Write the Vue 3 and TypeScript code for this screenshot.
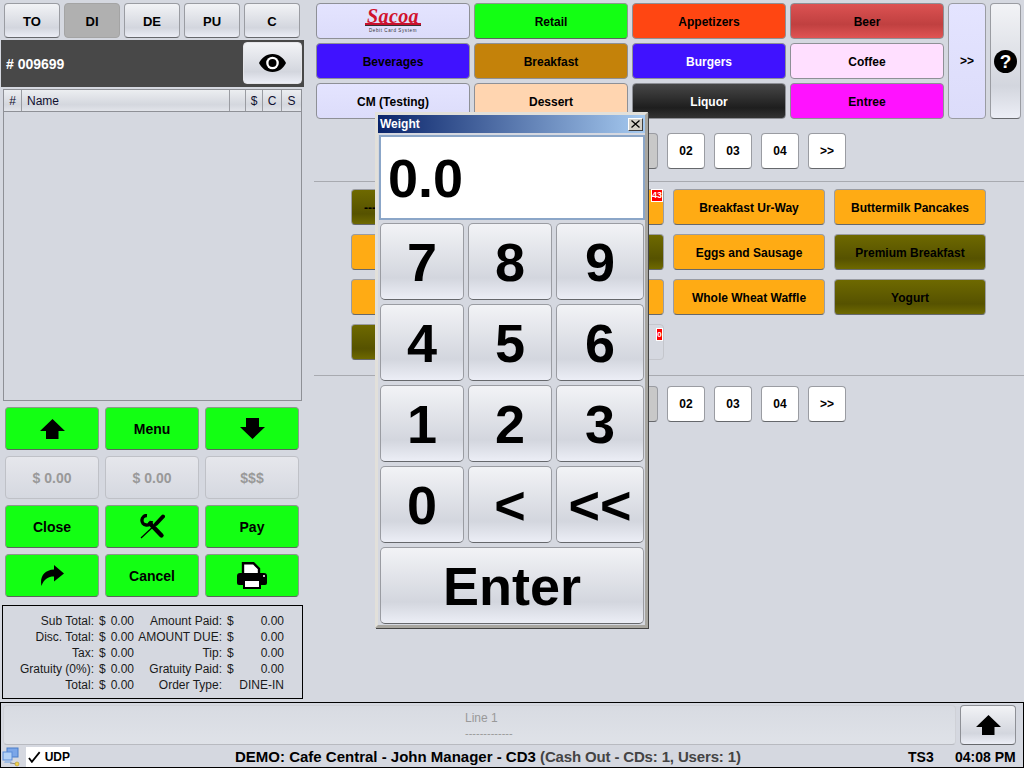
<script setup lang="ts">
interface Cat { label: string; cls: string }
const tabs = ['TO', 'DI', 'DE', 'PU', 'C']
const cats: Cat[] = [
  { label: '', cls: 'logo lav' },
  { label: 'Retail', cls: 'green' },
  { label: 'Appetizers', cls: 'red' },
  { label: 'Beer', cls: 'beer' },
  { label: 'Beverages', cls: 'blue' },
  { label: 'Breakfast', cls: 'brown' },
  { label: 'Burgers', cls: 'blue white' },
  { label: 'Coffee', cls: 'pink' },
  { label: 'CM (Testing)', cls: 'lav' },
  { label: 'Dessert', cls: 'peach' },
  { label: 'Liquor', cls: 'dark white' },
  { label: 'Entree', cls: 'magenta' }
]
interface Item { label: string; cls: string; badge?: string }
const items: Item[] = [
  { label: '---', cls: 'olive dash' },
  { label: '', cls: 'orange', badge: '43' },
  { label: 'Breakfast Ur-Way', cls: 'orange' },
  { label: 'Buttermilk Pancakes', cls: 'orange' },
  { label: '', cls: 'orange' },
  { label: '', cls: 'olive' },
  { label: 'Eggs and Sausage', cls: 'orange' },
  { label: 'Premium Breakfast', cls: 'olive' },
  { label: '', cls: 'orange' },
  { label: '', cls: 'orange' },
  { label: 'Whole Wheat Waffle', cls: 'orange' },
  { label: 'Yogurt', cls: 'olive' },
  { label: '', cls: 'olive' },
  { label: '', cls: 'off', badge: '0' }
]
const pages = ['', '02', '03', '04', '>>']
const summary = [
  ['Sub Total:', '0.00', 'Amount Paid:', '$', '0.00'],
  ['Disc. Total:', '0.00', 'AMOUNT DUE:', '$', '0.00'],
  ['Tax:', '0.00', 'Tip:', '$', '0.00'],
  ['Gratuity (0%):', '0.00', 'Gratuity Paid:', '$', '0.00'],
  ['Total:', '0.00', 'Order Type:', '', 'DINE-IN']
]
const keys = ['7', '8', '9', '4', '5', '6', '1', '2', '3', '0', '<', '<<']
</script>

<template>
  <div class="screen">
    <div class="main">
      <section class="left">
        <div class="tabs">
          <button v-for="t in tabs" :key="t" class="btn tab" :class="{ active: t === 'DI' }">{{ t }}</button>
        </div>
        <div class="order">
          <span class="order-no"># 009699</span>
          <button class="btn eye">
            <svg width="27" height="18" viewBox="0 0 27 18">
              <path d="M13.5 0C7 0 2.500 4 0 9c2.500 5 7 9 13.500 9S24.500 14 27 9C24.500 4 20 0 13.500 0z" fill="#000" />
              <circle cx="13.500" cy="9" r="6.300" fill="#fff" />
              <circle cx="13.500" cy="9" r="4" fill="#000" />
            </svg>
          </button>
        </div>
        <div class="table">
          <div class="thead">
            <span class="th c-num">#</span>
            <span class="th c-name">Name</span>
            <span class="th c-blank"></span>
            <span class="th c-price">$</span>
            <span class="th c-c">C</span>
            <span class="th c-s">S</span>
          </div>
        </div>
        <div class="actions">
          <button class="btn green act">
            <svg width="25" height="20" viewBox="0 0 25 20"><polygon points="12.500,0 25,12 18.500,12 18.500,20 6,20 6,12 0,12" fill="#000" /></svg>
          </button>
          <button class="btn green act">Menu</button>
          <button class="btn green act">
            <svg width="25" height="21" viewBox="0 0 25 21"><polygon points="6,0 19,0 19,9 25,9 12.500,21 0,9 6,9" fill="#000" /></svg>
          </button>
          <button class="btn act disabled">$ 0.00</button>
          <button class="btn act disabled">$ 0.00</button>
          <button class="btn act disabled">$$$</button>
          <button class="btn green act">Close</button>
          <button class="btn green act">
            <svg width="25" height="25" viewBox="0 0 25 25" fill="none" stroke="#000">
              <path d="M23 2.500L16 10" stroke-width="4" stroke-linecap="round" />
              <path d="M16 10L1 24" stroke-width="1.300" />
              <path d="M10 9.500L21.500 21.500" stroke-width="4.400" stroke-linecap="round" />
              <path d="M7 1.500A4.800 4.800 0 1 0 11.500 7" stroke-width="3.400" />
            </svg>
          </button>
          <button class="btn green act">Pay</button>
          <button class="btn green act">
            <svg width="24" height="21" viewBox="0 0 24 21"><path d="M14 0L24 8.500L14 16.500V11.500C8 11.500 4 14 1.500 21C-.5 12 4 5 14 4.500Z" fill="#000" /></svg>
          </button>
          <button class="btn green act">Cancel</button>
          <button class="btn green act">
            <svg width="30" height="27" viewBox="0 0 30 27">
              <path d="M6 1.200h10.500l5.500 5.500v6H6z" fill="#fff" stroke="#000" stroke-width="2.400" />
              <path d="M3 11h24a3 3 0 0 1 3 3v7a2 2 0 0 1-2 2H2a2 2 0 0 1-2-2v-7a3 3 0 0 1 3-3z" fill="#000" />
              <rect x="7" y="18" width="16" height="8" fill="#fff" stroke="#000" stroke-width="2" />
              <circle cx="27" cy="14" r="1" fill="#fff" />
            </svg>
          </button>
        </div>
        <div class="summary">
          <div v-for="row in summary" :key="row[0]" class="sum-row">
            <span class="sum-label">{{ row[0] }}</span>
            <span class="sum-val"><span>$</span><span>{{ row[1] }}</span></span>
            <span class="sum-label">{{ row[2] }}</span>
            <span class="sum-val"><span>{{ row[3] }}</span><span>{{ row[4] }}</span></span>
          </div>
        </div>
      </section>

      <section class="right">
        <div class="cats">
          <button v-for="c in cats" :key="c.label" class="btn cat" :class="c.cls">
            <span v-if="c.label">{{ c.label }}</span>
            <span v-else class="sacoa">
              <span class="sacoa-name">Sacoa</span>
              <span class="sacoa-sub">Debit Card System</span>
            </span>
          </button>
          <button class="btn lav more">&gt;&gt;</button>
          <button class="btn help">
            <svg width="23" height="23" viewBox="0 0 23 23">
              <circle cx="11.500" cy="11.500" r="11.500" fill="#000" />
              <text x="11.500" y="18" text-anchor="middle" class="help-q">?</text>
            </svg>
          </button>
        </div>
        <div class="pager">
          <button v-for="p in pages" :key="p" class="btn page" :class="{ current: p === '' }">{{ p }}</button>
        </div>
        <div class="sep sep-a"></div>
        <div class="items">
          <button v-for="(it, i) in items" :key="i" class="btn item" :class="it.cls">
            {{ it.label }}
            <span v-if="it.badge" class="badge" :class="{ small: it.badge === '0' }">{{ it.badge }}</span>
          </button>
        </div>
        <div class="sep sep-b"></div>
        <div class="pager pager-b">
          <button v-for="p in pages" :key="p" class="btn page" :class="{ current: p === '' }">{{ p }}</button>
        </div>
      </section>
    </div>

    <footer class="footer">
      <div class="line-row">
        <div class="line">
          <span>Line 1</span>
          <span class="line-dash">-------------</span>
        </div>
        <button class="btn up">
          <svg width="25" height="20" viewBox="0 0 25 20"><polygon points="12.500,0 25,12 18.500,12 18.500,20 6,20 6,12 0,12" fill="#000" /></svg>
        </button>
      </div>
      <div class="status">
        <svg class="net" width="19" height="20" viewBox="0 0 19 20">
          <rect x="5" y="1" width="11" height="9" fill="#7ba6e8" stroke="#4a7cc8" />
          <rect x="1" y="5" width="9" height="8" fill="#b4d2f6" stroke="#5a8cd8" />
          <path d="M3 14h6l1 2H2z" fill="#9fbde4" />
          <path d="M8 16l7 1" stroke="#888" />
          <circle cx="15" cy="17" r="2" fill="#f2d04a" stroke="#a08820" stroke-width=".5" />
        </svg>
        <div class="udp">
          <svg width="13" height="12" viewBox="0 0 13 12"><path d="M1 7l3 4L12 1" fill="none" stroke="#000" stroke-width="1.800" /></svg>
          <span>UDP</span>
        </div>
        <div class="demo">DEMO: Cafe Central - John Manager - CD3 <span class="demo-sub">(Cash Out - CDs: 1, Users: 1)</span></div>
        <span class="ts">TS3</span>
        <span class="time">04:08 PM</span>
      </div>
    </footer>

    <div class="dialog">
      <div class="title">
        <span>Weight</span>
        <button class="close">
          <svg width="9" height="8" viewBox="0 0 9 8"><path d="M.5 .5l8 7M8.500 .5l-8 7" stroke="#000" stroke-width="1.300" /></svg>
        </button>
      </div>
      <div class="display">0.0</div>
      <div class="keys">
        <button v-for="k in keys" :key="k" class="btn key">{{ k }}</button>
        <button class="btn key enter">Enter</button>
      </div>
    </div>
  </div>
</template>

<style>
html, body { margin: 0; background: #d5d8e0; }
</style>

<style scoped>
.screen {
  position: relative;
  width: 1024px;
  height: 768px;
  overflow: hidden;
  display: flex;
  flex-direction: column;
  background: #d5d8e0;
  font-family: "Liberation Sans", Arial, sans-serif;
  color: #000;
}
.main { display: flex; height: 702px; }
.left { width: 314px; flex: none; }
.right { flex: 1; }

.btn {
  box-sizing: border-box;
  margin: 0;
  padding: 0;
  display: flex;
  align-items: center;
  justify-content: center;
  border: 1px solid #9a9ca2;
  border-bottom-color: #66686c;
  border-radius: 4px;
  background: linear-gradient(#f2f3f6 0%, #d3d6de 72%, #eceef6 100%);
  font: bold 12px "Liberation Sans", Arial, sans-serif;
  color: #000;
}

.tabs { display: flex; gap: 4px; padding: 3px 0 0 4px; }
.tab { width: 56px; height: 35px; font-size: 13px; padding-top: 2px; }
.tab.active { background: #b0b0b0; border-color: #a4a4a4; }

.order {
  box-sizing: border-box;
  width: 303px;
  height: 47px;
  margin: 2px 0 0 1px;
  padding: 2px 2px 3px 5px;
  display: flex;
  align-items: center;
  justify-content: space-between;
  background: #484848;
}
.order-no { color: #fff; font-size: 14px; font-weight: bold; padding-top: 2px; }
.eye { width: 59px; height: 42px; border-color: #e4e4e8; }

.table {
  box-sizing: border-box;
  width: 299px;
  height: 312px;
  margin: 2px 0 0 3px;
  border: 1px solid #8e9096;
}
.thead {
  display: flex;
  height: 22px;
  box-sizing: border-box;
  border-bottom: 1px solid #8e9096;
  background: linear-gradient(#eceef1, #d4d7de 70%, #e2e4ea);
  font-size: 12px;
  line-height: 23px;
}
.th { box-sizing: border-box; color: #101030; border-right: 1px solid #9a9ca2; text-align: center; }
.c-num { width: 18px; }
.c-name { width: 208px; text-align: left; padding-left: 5px; }
.c-blank { width: 16px; }
.c-price { width: 17px; }
.c-c { width: 19px; }
.c-s { width: 19px; border-right: none; }

.actions {
  display: grid;
  grid-template-columns: repeat(3, 94px);
  grid-auto-rows: 43px;
  gap: 6px;
  margin: 6px 0 0 5px;
}
.act { font-size: 14px; }
.disabled {
  color: #999;
  border-color: #bfc1c7;
  background: linear-gradient(#e6e7ec, #d5d8e0);
}

.summary {
  box-sizing: border-box;
  width: 301px;
  height: 94px;
  margin: 8px 0 0 2px;
  padding: 7px 0 0;
  border: 1px solid #000;
  font-size: 12px;
  color: #1a1a1a;
}
.sum-row {
  display: grid;
  grid-template-columns: 91px 40px 88px 62px;
  height: 16px;
  line-height: 16px;
}
.sum-label { text-align: right; white-space: nowrap; }
.sum-val { display: flex; justify-content: space-between; padding-left: 5px; }

.cats {
  display: grid;
  grid-template-columns: repeat(4, 154px) 38px 31px;
  grid-auto-rows: 36px;
  gap: 4px;
  margin: 3px 0 0 2px;
}
.cat { border-color: #8e9096; padding-top: 2px; }
.more { grid-column: 5; grid-row: 1 / span 3; border-color: #9a9ca2; }
.help { grid-column: 6; grid-row: 1 / span 3; }
.help-q { font: bold 19px "Liberation Sans", Arial, sans-serif; fill: #fff; }

.lav { background: linear-gradient(#e4e4ff, #dcdcfa); }
.green { background: #13ff13; border-color: #8a9a8a; border-bottom-color: #5c665c; }
.red { background: #ff4612; }
.beer { background: linear-gradient(#dc5252, #c04040 60%, #e05454); }
.blue { background: #4012ff; }
.brown { background: #c4820a; }
.pink { background: #ffdfff; }
.peach { background: #ffd5b0; }
.dark { background: linear-gradient(#474747, #1e1e1e 70%, #333); }
.magenta { background: #ff12ff; }
.white { color: #fff; }
.orange { background: #ffab14; }
.olive { background: linear-gradient(#6e6900, #565200 70%, #6e6900); }
.off { background: #d5d8e0; border-color: #c4c6cc; color: #999; }

.logo { padding-top: 0; }
.sacoa { display: flex; flex-direction: column; align-items: center; line-height: 1; }
.sacoa-name {
  width: 56px;
  height: 16px;
  box-sizing: border-box;
  border-bottom: 2px solid #c8102e;
  box-shadow: 0 1px 0 #333;
  font: italic bold 20px/15px "Liberation Serif", "Times New Roman", serif;
  letter-spacing: .4px;
  color: #d0122c;
  text-align: center;
}
.sacoa-sub {
  margin-top: 3px;
  font: 4.500px/5px "Liberation Sans", Arial, sans-serif;
  letter-spacing: .6px;
  color: #333;
  white-space: nowrap;
}

.pager { display: flex; gap: 9px; margin: 14px 0 0 306px; }
.pager-b { margin-top: 10px; }
.page { width: 38px; height: 36px; background: #fff; }
.page.current { background: #c8c8c8; }

.sep { height: 1px; background: #a8aab0; }
.sep-a { margin-top: 12px; }
.sep-b { margin-top: 15px; }

.items {
  display: grid;
  grid-template-columns: repeat(4, 152px);
  grid-auto-rows: 36px;
  column-gap: 9px;
  row-gap: 9px;
  margin: 7px 0 0 37px;
}
.item { position: relative; white-space: nowrap; padding-top: 2px; }
.dash { justify-content: flex-start; padding-left: 12px; }
.badge {
  position: absolute;
  top: -1px;
  right: 0;
  box-sizing: border-box;
  width: 12px;
  height: 13px;
  border: 1px solid #fff;
  background: #f00;
  color: #fff;
  font-size: 9px;
  line-height: 11px;
  text-align: center;
}
.badge.small { width: 7px; top: 3px; font-size: 8px; }

.footer {
  box-sizing: border-box;
  height: 66px;
  border: 1px solid #000;
}
.line-row { display: flex; gap: 4px; padding: 2px 0 0 2px; }
.line {
  box-sizing: border-box;
  width: 953px;
  height: 40px;
  display: flex;
  flex-direction: column;
  align-items: flex-start;
  padding: 5px 0 0 461px;
  border: 1px solid #cfd1d7;
  border-bottom-color: #b8bac0;
  border-radius: 4px;
  background: linear-gradient(#d8dbe2, #dfe2e8);
  color: #999;
  font-size: 12px;
  line-height: 14px;
}
.line-dash { font-size: 11px; line-height: 16px; }
.up { width: 56px; height: 40px; border-color: #8e9096; border-bottom-color: #66686c; }

.status { display: flex; align-items: center; height: 21px; margin-top: 1px; font-size: 14px; font-weight: bold; white-space: nowrap; }
.net { margin-left: 1px; flex: none; }
.udp {
  display: flex;
  align-items: center;
  gap: 4px;
  box-sizing: border-box;
  width: 44px;
  height: 20px;
  margin-left: 5px;
  padding-left: 2px;
  background: #fff;
  font-size: 12px;
}
.demo { margin-left: 165px; width: 673px; font-size: 15px; }
.demo-sub { color: #444; letter-spacing: -.15px; }
.ts { width: 47px; }

.dialog {
  position: absolute;
  left: 375px;
  top: 112px;
  box-sizing: border-box;
  width: 273px;
  height: 516px;
  border: 3px solid #e2e0da;
  border-right-color: #a8a6a0;
  border-bottom-color: #a8a6a0;
  box-shadow: 1px 1px 0 #444;
  background: #d5d8e0;
}
.title {
  display: flex;
  align-items: center;
  justify-content: space-between;
  height: 18px;
  padding: 0 2px;
  background: linear-gradient(90deg, #0a246a, #a6caf0);
  color: #fff;
  font-size: 12px;
  font-weight: bold;
}
.close {
  display: flex;
  align-items: center;
  justify-content: center;
  box-sizing: border-box;
  width: 15px;
  height: 13px;
  padding: 0;
  border: 1px solid;
  border-color: #fff #404040 #404040 #fff;
  background: #d4d0c8;
}
.display {
  box-sizing: border-box;
  height: 85px;
  margin: 2px 0 0 1px;
  width: 266px;
  padding-left: 7px;
  border: 2px solid #8ba6c8;
  background: #fff;
  font-size: 54px;
  font-weight: bold;
  line-height: 83px;
}
.keys {
  display: grid;
  grid-template-columns: 84px 84px 88px;
  grid-auto-rows: 77px;
  gap: 4px;
  margin: 3px 0 0 2px;
}
.key { font-size: 54px; border-radius: 5px; }
.enter { grid-column: 1 / span 3; }
</style>
